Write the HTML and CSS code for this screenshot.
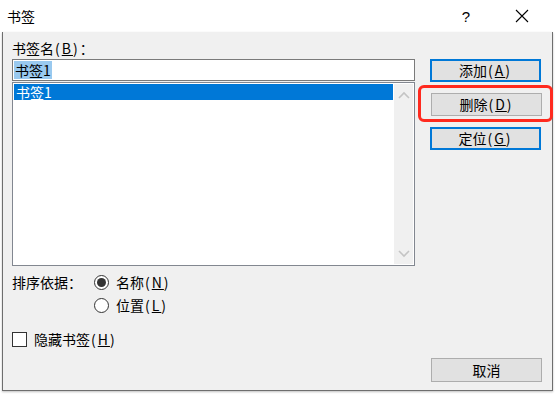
FILE: index.html
```html
<!DOCTYPE html>
<html lang="zh-CN">
<head>
<meta charset="utf-8">
<link rel="stylesheet" href="styles.css">
</head>
<body>
<div class="window">
  <div class="titlebar">
    <span class="title">书签</span>
    <span class="help">?</span>
    <span class="close">
      <svg width="14" height="14" viewBox="0 0 14 14"><path d="M1 1 L13 13 M13 1 L1 13" stroke="#000" stroke-width="1.1" fill="none"/></svg>
    </span>
  </div>
  <div class="body">
    <div class="main">
      <div class="left">
        <div class="label">书签名<span class="k">(<u>B</u>)</span>：</div>
        <div class="input"><span class="sel">书签1</span></div>
        <div class="list">
          <div class="items">
            <div class="item active">书签1</div>
          </div>
          <div class="scroll">
            <svg width="12" height="8" viewBox="0 0 12 8"><path d="M1 7 L6 2 L11 7" stroke="#c4c4c4" stroke-width="1.6" fill="none"/></svg>
            <svg width="12" height="8" viewBox="0 0 12 8"><path d="M1 1 L6 6 L11 1" stroke="#c4c4c4" stroke-width="1.6" fill="none"/></svg>
          </div>
        </div>
      </div>
      <div class="right">
        <button class="btn def">添加<span class="k">(<u>A</u>)</span></button>
        <div class="mark"><button class="btn">删除<span class="k">(<u>D</u>)</span></button></div>
        <button class="btn def">定位<span class="k">(<u>G</u>)</span></button>
      </div>
    </div>
    <div class="sort">
      <span class="sortlabel">排序依据：</span>
      <div class="radios">
        <label class="radio"><span class="dot on"></span>名称<span class="k">(<u>N</u>)</span></label>
        <label class="radio"><span class="dot"></span>位置<span class="k">(<u>L</u>)</span></label>
      </div>
    </div>
    <label class="check"><span class="box"></span>隐藏书签<span class="k">(<u>H</u>)</span></label>
    <div class="footer">
      <button class="btn cancel">取消</button>
    </div>
  </div>
</div>
</body>
</html>
```
FILE: styles.css
```css
* { box-sizing: border-box; }
html, body { margin: 0; padding: 0; }
body {
  width: 555px;
  height: 394px;
  background: #ffffff;
  font-family: "Noto Sans CJK SC", "Liberation Sans", sans-serif;
  font-size: 14px;
  color: #000;
  overflow: hidden;
}
u { text-decoration: underline; text-underline-offset: 1px; }
.k { letter-spacing: 2px; margin-left: 1px; }
.window {
  width: 555px;
  height: 394px;
  display: flex;
  flex-direction: column;
}
.titlebar {
  height: 32px;
  display: flex;
  align-items: center;
  background: #fff;
  padding-left: 7px;
}
.title { font-size: 14px; flex: 1; }
.help {
  font-family: "Liberation Sans", sans-serif;
  font-size: 15px;
  width: 20px;
  text-align: center;
  margin-right: 39px;
}
.close {
  width: 14px;
  height: 14px;
  margin-right: 26px;
  display: flex;
}
.body {
  height: 359px;
  margin: 0 2px 0 2px;
  background: #f0f0f0;
  border: 1px solid #6e6e6e;
  border-top: none;
  box-shadow: 0 1px 2px rgba(0,0,0,0.25);
  padding: 7px 0 0 9px;
  display: flex;
  flex-direction: column;
}
.main {
  display: flex;
  gap: 15px;
}
.left {
  width: 403px;
  display: flex;
  flex-direction: column;
}
.label {
  height: 18px;
  line-height: 18px;
  margin-bottom: 2px;
}
.input {
  height: 22px;
  background: #fff;
  border: 1px solid #7a7a7a;
  padding: 1px 1px;
  line-height: 18px;
}
.sel {
  background: #99c9ef;
  display: inline-block;
  line-height: 18px;
  padding: 0 1px;
}
.list {
  margin-top: 1px;
  height: 184px;
  background: #fff;
  border: 1px solid #828790;
  display: flex;
  padding: 1px;
}
.items { flex: 1; }
.item {
  height: 16px;
  line-height: 16px;
  padding-left: 2px;
}
.item.active { background: #0078d7; color: #fff; }
.scroll {
  width: 19px;
  margin-left: 1px;
  background: #f0f0f0;
  display: flex;
  flex-direction: column;
  justify-content: space-between;
  align-items: center;
  padding: 7px 0 6px;
}
.right {
  width: 111px;
  padding-top: 20px;
  display: flex;
  flex-direction: column;
}
.btn {
  font-family: inherit;
  font-size: 14px;
  width: 111px;
  height: 23px;
  background: #e1e1e1;
  border: 1px solid #adadad;
  padding: 0;
  line-height: 19px;
  color: #000;
}
.btn.def { border: 2px solid #0078d7; }
.mark {
  margin: 3px -12px 0 -12px;
  padding: 5px 10px 5px 10px;
  border: 3px solid #ff2a1f;
  border-radius: 6px;
  height: 37px;
}
.mark .btn { width: 111px; }
.right .btn.def:last-child { margin-top: 5px; }
.sort {
  display: flex;
  margin-top: 5px;
}
.sortlabel {
  width: 82px;
  line-height: 22px;
}
.radios { display: flex; flex-direction: column; gap: 1px; }
.radio {
  display: flex;
  align-items: center;
  height: 22px;
}
.dot {
  width: 15px;
  height: 15px;
  border: 1px solid #333;
  border-radius: 50%;
  background: #fff;
  margin-right: 7px;
  display: flex;
  align-items: center;
  justify-content: center;
}
.dot.on::after {
  content: "";
  width: 9px;
  height: 9px;
  border-radius: 50%;
  background: #333;
}
.check {
  display: flex;
  align-items: center;
  height: 22px;
  margin-top: 12px;
}
.box {
  width: 15px;
  height: 15px;
  border: 1px solid #333;
  background: #fff;
  margin-right: 7px;
}
.footer {
  margin-top: auto;
  display: flex;
  justify-content: flex-end;
  padding-right: 10px;
  padding-bottom: 8px;
}
.btn.cancel { height: 24px; }
```
